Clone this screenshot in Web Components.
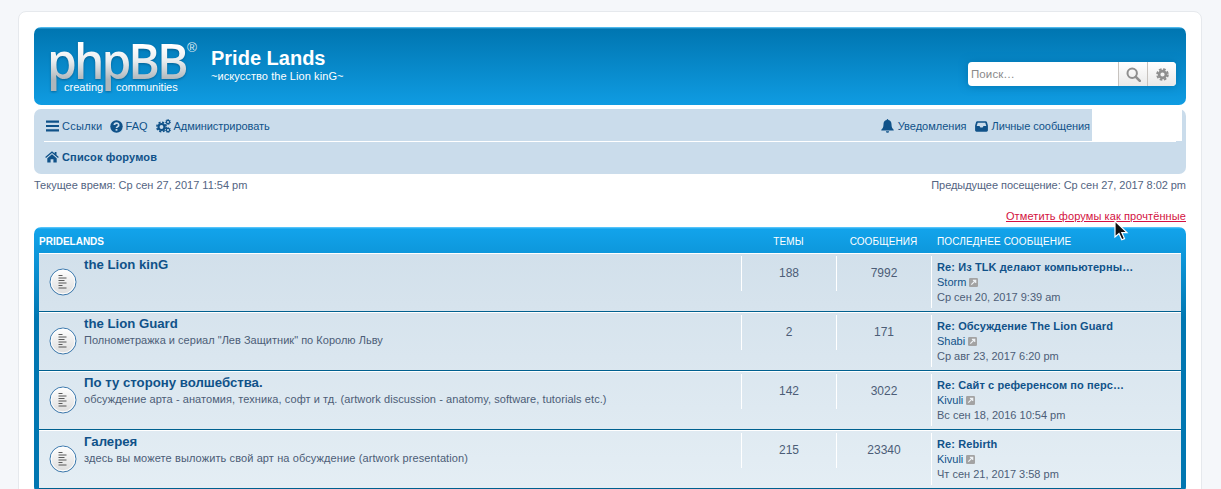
<!DOCTYPE html>
<html lang="ru">
<head>
<meta charset="utf-8">
<title>Pride Lands</title>
<style>
  html { overflow: hidden; }
  body {
    margin: 0;
    padding: 11px 0;
    background: #f5f7fa;
    color: #536482;
    font: 11px/15px "Liberation Sans", Arial, sans-serif;
  }
</style>
</head>
<body>
<forum-page></forum-page>

<script>
  const ICONS = {
    bars: `<svg width="13" height="12" viewBox="0 0 13 12"><path fill="#105289" d="M0 .5h13v2.2H0zM0 4.9h13v2.2H0zM0 9.3h13v2.2H0z"/></svg>`,
    faq: `<svg width="13" height="13" viewBox="0 0 13 13"><circle cx="6.5" cy="6.5" r="6.2" fill="#105289"/><path d="M4.3 5a2.2 1.9 0 1 1 3.4 1.6c-.8.5-1.2.8-1.2 1.5" fill="none" stroke="#cadceb" stroke-width="1.7"/><path fill="#cadceb" d="M5.6 9h1.8v1.7H5.6z"/></svg>`,
    cogs: `<svg width="15" height="14" viewBox="0 0 15 14"><g fill="none" stroke="#105289"><circle cx="5.5" cy="8" r="3" stroke-width="2.2"/><circle cx="5.5" cy="8" r="4.7" stroke-width="1.6" stroke-dasharray="2.1 1.6"/><circle cx="12" cy="3" r="1.6" stroke-width="1.2"/><circle cx="12" cy="3" r="2.5" stroke-width="1" stroke-dasharray="1.2 1"/><circle cx="12" cy="11" r="1.6" stroke-width="1.2"/><circle cx="12" cy="11" r="2.5" stroke-width="1" stroke-dasharray="1.2 1"/></g></svg>`,
    home: `<svg width="14" height="12" viewBox="0 0 14 12"><path fill="#105289" d="M7 .3.2 6l.8 1L7 2l6 5 .8-1-2.3-1.9V1h-1.8v1.6zM2.3 7.2 7 3.3l4.7 3.9v4.3H8.4V8.2H5.600v3.300H2.300z"/></svg>`,
    bell: `<svg width="13" height="14" viewBox="0 0 13 14"><path fill="#105289" d="M6.500 0c.5 0 .8.3.8.9 2.300.4 3.200 2.200 3.200 4.300 0 2.900.9 4.300 2.200 5.500V11.500H.3v-.8C1.600 9.500 2.500 8.100 2.500 5.200c0-2.100.9-3.900 3.200-4.300 0-.6.3-.9.8-.9zM4.900 12.200h3.200a1.600 1.600 0 0 1-3.200 0z"/></svg>`,
    inbox: `<svg width="13" height="11" viewBox="0 0 13 11"><path fill="#105289" fill-rule="evenodd" d="M2.300.3h8.400c.6 0 1 .3 1.200.8l1 3.500v4.700c0 .8-.6 1.400-1.400 1.400H1.500C.7 10.700.1 10.100.1 9.300V4.600l1-3.500C1.300.6 1.700.3 2.300.3zM2.700 1.800 1.700 5h2.800l.9 1.500h2.200L8.500 5h2.800l-1-3.200z"/></svg>`,
    search: `<svg width="15" height="15" viewBox="0 0 15 15"><circle cx="6.200" cy="6.200" r="4.700" fill="none" stroke="#8f8f8f" stroke-width="2"/><path d="m9.800 9.800 4 4" stroke="#8f8f8f" stroke-width="2.600" stroke-linecap="round"/></svg>`,
    gear: `<svg width="13" height="13" viewBox="0 0 13 13"><g fill="none" stroke="#8f8f8f"><circle cx="6.500" cy="6.500" r="3.400" stroke-width="2.600"/><circle cx="6.500" cy="6.500" r="5.300" stroke-width="2" stroke-dasharray="2.600 1.560"/></g></svg>`,
    link: `<svg width="9" height="9" viewBox="0 0 9 9"><rect width="9" height="9" rx="1.200" fill="#a3a3a3"/><path d="M2.300 6.700 6 3M3.900 2.300h2.800v2.800" fill="none" stroke="#eef2f5" stroke-width="1.200"/></svg>`
  };

  class ForumLogo extends HTMLElement {
    constructor() {
      super();
      this.shadow = this.attachShadow({ mode: "open" });
    }
    connectedCallback() {
      this.shadow.innerHTML = `<style>
          :host { display: block; position: relative; width: 156px; height: 62px; flex: none; }
          .mark {
            font: 600 48px/62px "Open Sans", sans-serif;
            letter-spacing: -3px;
            background: linear-gradient(#ffffff 25%, #e9edef 50%, #aeb6bb 80%);
            -webkit-background-clip: text;
            background-clip: text;
            color: transparent;
            filter: drop-shadow(0 1px 1px rgba(0,60,100,.5));
            margin: -11px 0 0 -2px;
            display: block;
          }
          .reg { position: absolute; left: 138px; top: 1px; color: #dfe8ee; font-size: 13.5px; line-height: 12px; }
          .sub { position: absolute; top: 39px; color: #fff; font-size: 11px; line-height: 14px; }
        </style>
        <span class="mark">phpBB</span>
        <span class="reg">®</span>
        <span class="sub" style="left:15px">creating</span>
        <span class="sub" style="left:67px">communities</span>`;
    }
  }

  class SearchBox extends HTMLElement {
    constructor() {
      super();
      this.shadow = this.attachShadow({ mode: "open" });
    }
    connectedCallback() {
      this.shadow.innerHTML = `<style>
          :host {
            display: flex; height: 24px; width: 208px; border-radius: 4px; overflow: hidden;
            background: #fff; box-shadow: 0 0 8px #0075b0; box-sizing: border-box;
          }
          .q { flex: 1; padding: 0 3px; font-size: 11.5px; line-height: 24px; color: #8a8a8a; letter-spacing: .1px; }
          .btn {
            display: flex; align-items: center; justify-content: center; box-sizing: border-box; width: 29px;
            background: linear-gradient(#fff, #e9e9e9); border-left: 1px solid #c7c3bf;
          }
        </style>
        <div class="q">Поиск…</div>
        <div class="btn">${ICONS.search}</div>
        <div class="btn">${ICONS.gear}</div>`;
    }
  }

  class SiteHeader extends HTMLElement {
    constructor() {
      super();
      this.shadow = this.attachShadow({ mode: "open" });
    }
    connectedCallback() {
      this.shadow.innerHTML = `<style>
          :host {
            display: flex; height: 78px; box-sizing: border-box; padding: 14px 10px 0 15px;
            border-radius: 7px; margin-bottom: 4px; color: #fff;
            background: linear-gradient(#6aceff 0, #0076b1 2px, #12a3eb 92px);
          }
          .desc { margin-left: 6px; padding-top: 5px; flex: 1; }
          h1 { margin: 0; font: bold 20px/24px "Liberation Sans", sans-serif; }
          p { margin: 0; font-size: 11px; line-height: 13px; letter-spacing: .08px; }
          search-box { margin-top: 21px; }
        </style>
        <forum-logo></forum-logo>
        <div class="desc"><h1>Pride Lands</h1><p>~искусство the Lion kinG~</p></div>
        <search-box></search-box>`;
    }
  }

  class NavBar extends HTMLElement {
    constructor() {
      super();
      this.shadow = this.attachShadow({ mode: "open" });
    }
    connectedCallback() {
      this.shadow.innerHTML = `<style>
          :host {
            display: block; position: relative; height: 65px; box-sizing: border-box;
            background: #cadceb; border-radius: 7px; padding: 0 10px; color: #105289;
          }
          .row { display: flex; align-items: center; box-sizing: border-box; }
          .top { height: 33px; padding: 2px 0 0 2px; border-bottom: 1px solid #fff; }
          .crumbs { font-weight: bold; height: 30px; padding-left: 1px; letter-spacing: .15px; }
          .item { display: flex; align-items: center; gap: 3px; margin-right: 7px; white-space: nowrap; }
          .item svg { display: block; }
          .gap { flex: 1; }
          .right { display: flex; margin-right: 86px; }
          .right .item { gap: 3px; margin-right: 0; margin-left: 9px; }
          .right .bell { gap: 4px; margin-left: 0; }
          .patch { position: absolute; left: 1058px; top: 0; width: 90px; height: 32px; background: #fff; }
        </style>
        <div class="row top">
          <span class="item" style="letter-spacing:.3px">${ICONS.bars}Ссылки</span>
          <span class="item" style="margin-right:8px">${ICONS.faq}FAQ</span>
          <span class="item" style="letter-spacing:-.06px">${ICONS.cogs}Администрировать</span>
          <span class="gap"></span>
          <span class="right">
            <span class="item bell">${ICONS.bell}Уведомления</span>
            <span class="item" style="letter-spacing:-.07px">${ICONS.inbox}Личные сообщения</span>
          </span>
        </div>
        <div class="row crumbs"><span class="item">${ICONS.home}Список форумов</span></div>
        <div class="patch"></div>`;
    }
  }

  class ForumRow extends HTMLElement {
    constructor() {
      super();
      this.shadow = this.attachShadow({ mode: "open" });
    }
    connectedCallback() {
      const a = (n) => this.getAttribute(n) || "";
      this.shadow.innerHTML = `<style>
          :host {
            display: flex; height: 59px; box-sizing: border-box;
            border-top: 1px solid #fff; border-bottom: 1px solid #00608f;
          }
          .ic { width: 45px; flex: none; padding: 14px 0 0 10px; box-sizing: border-box; }
          .ic svg { display: block; }
          .main { flex: 1; padding-top: 3px; }
          .t { color: #105289; font: bold 13.2px/15px "Liberation Sans", sans-serif; }
          .d { color: #4c5d77; line-height: 15px; margin-top: 2px; letter-spacing: ${a("ls") || 0}px; }
          .n {
            width: 95px; flex: none; box-sizing: border-box; border-left: 1px solid #fff;
            margin-top: 2px; height: 35px; text-align: center; color: #4c5d77;
            font-size: 12px; line-height: 34px;
          }
          .last {
            width: 250px; flex: none; box-sizing: border-box; border-left: 1px solid #fff;
            margin-top: 2px; height: 52px; padding: 4px 0 0 5px; color: #4c5d77;
          }
          .s { color: #105289; font-weight: bold; display: block; height: 15px; line-height: 14px; letter-spacing: .1px; }
          .u { color: #105289; display: flex; align-items: center; gap: 3px; height: 15px; }
          .date { display: block; height: 15px; }
        </style>
        <div class="ic">
          <svg width="28" height="28" viewBox="0 0 28 28">
            <defs><linearGradient id="g" x1="0" y1="0" x2="0" y2="1"><stop offset="0" stop-color="#fff"/><stop offset="1" stop-color="#dcdcdc"/></linearGradient></defs>
            <circle cx="14" cy="14" r="13" fill="url(#g)" stroke="#3a78ad" stroke-width="1"/>
            <circle cx="14" cy="14" r="11.800" fill="none" stroke="#fff"/>
            <path stroke="#333" stroke-width=".8" d="M9.500 7.500h4M9.500 10h8M9.500 12.500h6M9.500 15h8M9.500 17.500h4M9.500 20h8"/>
          </svg>
        </div>
        <div class="main">
          <div class="t">${a("name")}</div>
          <div class="d">${a("desc")}</div>
        </div>
        <div class="n">${a("topics")}</div>
        <div class="n">${a("posts")}</div>
        <div class="last">
          <span class="s">${a("subject")}</span>
          <span class="u">${a("user")}${ICONS.link}</span>
          <span class="date">${a("date")}</span>
        </div>`;
    }
  }

  class ForumList extends HTMLElement {
    constructor() {
      super();
      this.shadow = this.attachShadow({ mode: "open" });
    }
    connectedCallback() {
      this.shadow.innerHTML = `<style>
          :host {
            display: block; padding: 0 5px 5px; border-radius: 7px;
            background: linear-gradient(#6aceff 0, #12a3eb 2px, #0076b1 92px, #0076b1);
          }
          .head {
            display: flex; height: 26px; box-sizing: border-box; padding-top: 3px; align-items: center;
            color: #fff; font-size: 10px; text-transform: uppercase;
          }
          .head b { flex: 1; }
          .c { width: 95px; text-align: center; letter-spacing: .1px; }
          .l { width: 250px; padding-left: 6px; box-sizing: border-box; letter-spacing: .15px; }
          .body { background: linear-gradient(#d2e0eb, #eef5f9 360px); }
        </style>
        <div class="head">
          <b>Pridelands</b>
          <span class="c">Темы</span>
          <span class="c">Сообщения</span>
          <span class="l">Последнее сообщение</span>
        </div>
        <div class="body"><slot></slot></div>`;
    }
  }

  class ForumPage extends HTMLElement {
    constructor() {
      super();
      this.shadow = this.attachShadow({ mode: "open" });
    }
    connectedCallback() {
      this.shadow.innerHTML = `<style>
          :host {
            display: block; position: relative; box-sizing: border-box; width: 1184px; margin-left: 18px;
            padding: 15px; background: #fff; border: 1px solid #e6e9ed; border-radius: 8px;
          }
          .times { display: flex; justify-content: space-between; margin-top: 4px; height: 15px; }
          .mark { text-align: right; margin: 16px 0 3px; height: 15px; }
          .mark a { color: #d31141; text-decoration: underline; letter-spacing: .1px; }
          .cursor { position: absolute; left: 1095px; top: 208px; }
        </style>
        <site-header></site-header>
        <nav-bar></nav-bar>
        <div class="times"><span>Текущее время: Ср сен 27, 2017 11:54 pm</span><span style="letter-spacing:-.05px">Предыдущее посещение: Ср сен 27, 2017 8:02 pm</span></div>
        <div class="mark"><a>Отметить форумы как прочтённые</a></div>
        <forum-list>
          <forum-row name="the Lion kinG" topics="188" posts="7992" subject="Re: Из TLK делают компьютерны…" user="Storm" date="Ср сен 20, 2017 9:39 am"></forum-row>
          <forum-row name="the Lion Guard" ls=".02" desc="Полнометражка и сериал &quot;Лев Защитник&quot; по Королю Льву" topics="2" posts="171" subject="Re: Обсуждение The Lion Guard" user="Shabi" date="Ср авг 23, 2017 6:20 pm"></forum-row>
          <forum-row name="По ту сторону волшебства." ls=".07" desc="обсуждение арта - анатомия, техника, софт и тд. (artwork discussion - anatomy, software, tutorials etc.)" topics="142" posts="3022" subject="Re: Сайт с референсом по перс…" user="Kivuli" date="Вс сен 18, 2016 10:54 pm"></forum-row>
          <forum-row name="Галерея" ls=".11" desc="здесь вы можете выложить свой арт на обсуждение (artwork presentation)" topics="215" posts="23340" subject="Re: Rebirth" user="Kivuli" date="Чт сен 21, 2017 3:58 pm"></forum-row>
        </forum-list>
        <svg class="cursor" width="15" height="21" viewBox="0 0 15 21"><path d="M1 1v16l4-3.500 2.800 6.300 2.700-1.200-2.700-6H13z" fill="#111" stroke="#fff" stroke-width="1.200"/></svg>`;
    }
  }

  customElements.define("forum-logo", ForumLogo);
  customElements.define("search-box", SearchBox);
  customElements.define("site-header", SiteHeader);
  customElements.define("nav-bar", NavBar);
  customElements.define("forum-row", ForumRow);
  customElements.define("forum-list", ForumList);
  customElements.define("forum-page", ForumPage);
</script>
</body>
</html>
